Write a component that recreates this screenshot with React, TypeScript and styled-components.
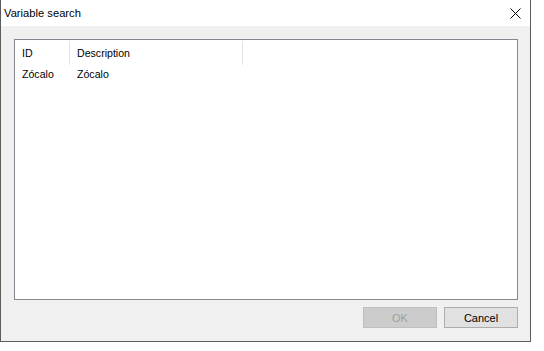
import React from 'react';
import styled, { createGlobalStyle } from 'styled-components';

const GlobalStyle = createGlobalStyle`
    * { box-sizing: border-box; }
    body {
        margin: 0;
        background: #ffffff;
        font-family: "Liberation Sans", Arial, sans-serif;
    }
`;

const Window = styled.div`
    width: 531px;
    height: 342px;
    display: flex;
    flex-direction: column;
    background: #f0f0f0;
    border: 1px solid #5c5c5c;
    border-top: none;
`;

const TitleBar = styled.div`
    height: 26px;
    flex-shrink: 0;
    display: flex;
    align-items: center;
    justify-content: space-between;
    background: #ffffff;
    padding: 0 9px 0 3px;
    font-size: 11.2px;
    color: #000000;
`;

const CloseButton = styled.div`
    width: 12px;
    height: 12px;
    display: flex;
    align-items: center;
    justify-content: center;
`;

const Body = styled.div`
    flex: 1;
    display: flex;
    flex-direction: column;
    padding: 13px 12px 0 13px;
`;

const ListBox = styled.div`
    height: 261px;
    background: #ffffff;
    border: 1px solid #828790;
    display: flex;
    flex-direction: column;
    font-size: 10.6px;
    color: #000000;
`;

const HeaderRow = styled.div`
    display: flex;
    height: 25px;
    padding-top: 1px;
`;

const HeaderCell = styled.div<{ $width: number }>`
    width: ${p => p.$width}px;
    height: 24px;
    display: flex;
    align-items: center;
    padding-left: 7px;
    border-right: 1px solid #e5e5e5;
`;

const Row = styled.div`
    display: flex;
    height: 17px;
    align-items: center;
`;

const Cell = styled.div<{ $width: number }>`
    width: ${p => p.$width}px;
    padding-left: 7px;
`;

const Footer = styled.div`
    display: flex;
    justify-content: flex-end;
    gap: 7px;
    margin-top: 7px;
`;

const Button = styled.button<{ $disabled?: boolean }>`
    width: 74px;
    height: 21px;
    padding: 0;
    font-family: "Liberation Sans", Arial, sans-serif;
    font-size: 11px;
    background: ${p => (p.$disabled ? '#cccccc' : '#e1e1e1')};
    border: 1px solid ${p => (p.$disabled ? '#bfbfbf' : '#adadad')};
    color: ${p => (p.$disabled ? '#a0a0a0' : '#000000')};
`;

const columns = [
    { key: 'id', label: 'ID', width: 55 },
    { key: 'desc', label: 'Description', width: 173 },
];

const rows = [{ id: 'Zócalo', desc: 'Zócalo' }];

export default function App() {
    return (
        <>
            <GlobalStyle />
            <Window>
                <TitleBar>
                    <span>Variable search</span>
                    <CloseButton>
                        <svg width="11" height="11" viewBox="0 0 11 11">
                            <path d="M0.5 0.5L10.5 10.5M10.5 0.5L0.5 10.5" stroke="#000" strokeWidth="1" />
                        </svg>
                    </CloseButton>
                </TitleBar>
                <Body>
                    <ListBox>
                        <HeaderRow>
                            {columns.map(c => (
                                <HeaderCell key={c.key} $width={c.width}>{c.label}</HeaderCell>
                            ))}
                        </HeaderRow>
                        {rows.map((r, i) => (
                            <Row key={i}>
                                <Cell $width={columns[0].width}>{r.id}</Cell>
                                <Cell $width={columns[1].width}>{r.desc}</Cell>
                            </Row>
                        ))}
                    </ListBox>
                    <Footer>
                        <Button $disabled>OK</Button>
                        <Button>Cancel</Button>
                    </Footer>
                </Body>
            </Window>
        </>
    );
}
